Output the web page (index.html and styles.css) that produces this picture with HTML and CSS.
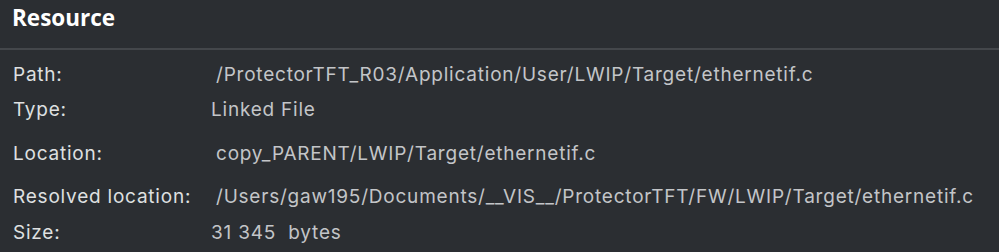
FILE: index.html
```html
<!DOCTYPE html>
<html>
<head>
<meta charset="utf-8">
<link rel="stylesheet" href="styles.css">
</head>
<body>
<div class="panel">
  <header class="head"><h1 class="title">Resource</h1></header>
  <div class="props">
    <div class="row row-path"><span class="label">Path:</span><span class="value field">/ProtectorTFT_R03/Application/User/LWIP/Target/ethernetif.c</span></div>
    <div class="row row-type"><span class="label">Type:</span><span class="value">Linked File</span></div>
    <div class="row row-loc"><span class="label">Location:</span><span class="value field">copy_PARENT/LWIP/Target/ethernetif.c</span></div>
    <div class="row row-res"><span class="label">Resolved location:</span><span class="value field">/Users/gaw195/Documents/__VIS__/ProtectorTFT/FW/LWIP/Target/ethernetif.c</span></div>
    <div class="row row-size"><span class="label">Size:</span><span class="value">31 345&nbsp; bytes</span></div>
  </div>
</div>
</body>
</html>
```
FILE: styles.css
```css
html, body {
  margin: 0;
  padding: 0;
  background: #2b2e32;
}
.panel {
  width: 999px;
  height: 252px;
  overflow: hidden;
  background: #2b2e32;
  font-family: Inter, "Noto Sans", sans-serif;
}
.head {
  height: 48px;
  border-bottom: 2px solid #44474b;
  box-sizing: content-box;
}
.title {
  margin: 0;
  padding: 3px 0 0 12px;
  font-family: "Open Sans", sans-serif;
  font-weight: 700;
  font-size: 22.5px;
  line-height: 30px;
  color: #ffffff;
}
.props {
  display: flex;
  flex-direction: column;
  padding-top: 13px;
}
.row {
  display: flex;
  align-items: center;
  height: 24px;
  font-size: 19px;
  letter-spacing: 0.78px;
  line-height: 24px;
}
.row-type { margin-top: 11px; }
.row-loc { margin-top: 20px; }
.row-res { margin-top: 19px; }
.row-size { margin-top: 12px; }
.label {
  width: 198px;
  padding-left: 13px;
  color: #dfe0e1;
}
.value {
  color: #c3c5c8;
}
.value.field {
  padding-left: 5px;
}
```
